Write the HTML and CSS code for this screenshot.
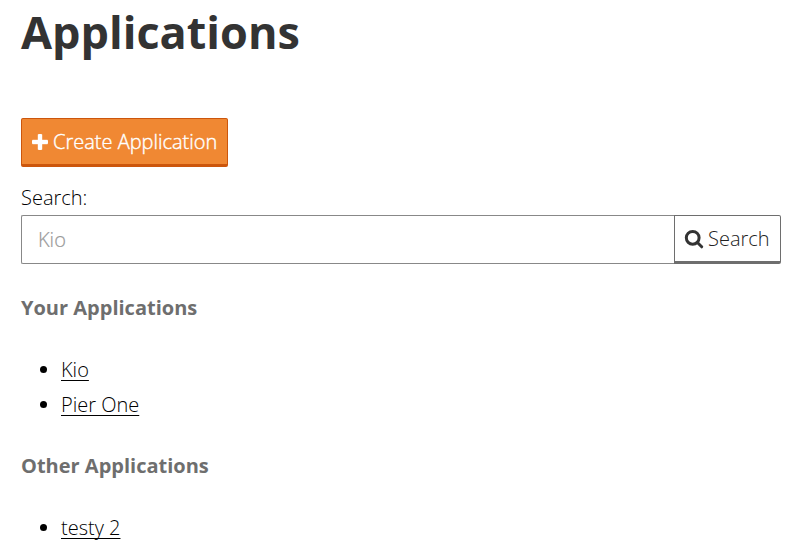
FILE: index.html
```html
<!DOCTYPE html>
<html lang="en">
<head>
<meta charset="utf-8">
<title>Applications</title>
<link rel="stylesheet" href="styles.css">
</head>
<body>
<main class="page">
  <h1 class="title">Applications</h1>
  <a class="btn btn-primary"><svg class="icon-plus" viewBox="0 0 16 16"><path d="M7 0h2q1 0 1 1v5h5q1 0 1 1v2q0 1-1 1h-5v5q0 1-1 1H7q-1 0-1-1v-5H1q-1 0-1-1V7q0-1 1-1h5V1q0-1 1-1z"/></svg><span class="label-create">Create Application</span></a>
  <label class="search-label" for="q">Search:</label>
  <div class="search">
    <input class="search-input" id="q" type="text" placeholder="Kio">
    <button class="btn-search"><svg class="icon-search" viewBox="0 0 20 20"><circle cx="8.7" cy="8.8" r="6.4"/><path d="M13.4 13.5l4.3 4.3"/></svg><span class="label-search">Search</span></button>
  </div>
  <h2 class="heading">Your Applications</h2>
  <ul class="list"><li><a class="link">Kio</a></li><li><a class="link">Pier One</a></li></ul>
  <h2 class="heading">Other Applications</h2>
  <ul class="list"><li><a class="link">testy 2</a></li></ul>
</main>
</body>
</html>
```
FILE: styles.css
```css
* { box-sizing: border-box; }
body { margin: 0; overflow: hidden; background: #fff; color: #000; font: 300 20px/35px "Open Sans", sans-serif; }
.page { padding: 0 15px 0 21px; }
.title { margin: 0 0 53px; height: 65px; font-size: 45px; line-height: 63px; font-weight: 700; color: #333; }
.btn { display: flex; align-items: center; width: 207px; height: 49px; padding: 0 10px; }
.btn-primary { background: #f08833; border: 1px solid #cc560c; border-bottom-width: 3px; border-radius: 2px; color: #fff; }
.icon-plus { width: 16px; height: 16px; margin-right: 5px; fill: #fff; stroke: #fff; stroke-width: 0.4; flex: none; }
.label-create, .label-search { white-space: nowrap; }
.label-create { -webkit-text-stroke: 0.4px #fff; }
.search-label { display: block; height: 35px; margin-top: 13px; }
.search { display: flex; height: 49px; }
.search-input { flex: 1; min-width: 0; border: 1px solid #888; border-right: 0; border-radius: 2px 0 0 2px; padding: 0 16px; font: inherit; }
.search-input::placeholder { color: #999; opacity: 1; -webkit-text-stroke: 0.2px #999; }
.btn-search { display: flex; align-items: center; width: 107px; padding: 0 9px; background: #fff; border: 1px solid #6e6e6e; border-bottom-width: 3px; border-radius: 0 2px 2px 0; font: inherit; color: #222; }
.icon-search { width: 20px; height: 20px; margin-right: 4px; flex: none; fill: none; stroke: #333; stroke-width: 3; stroke-linecap: round; }
.heading { margin: 26px 0 27px; font-size: 20px; line-height: 35px; font-weight: 700; color: #6e6e6e; }
.list { margin: 0; padding-left: 40px; }
.link { text-decoration: underline 1px; text-underline-offset: 3px; text-decoration-skip-ink: none; }
```
